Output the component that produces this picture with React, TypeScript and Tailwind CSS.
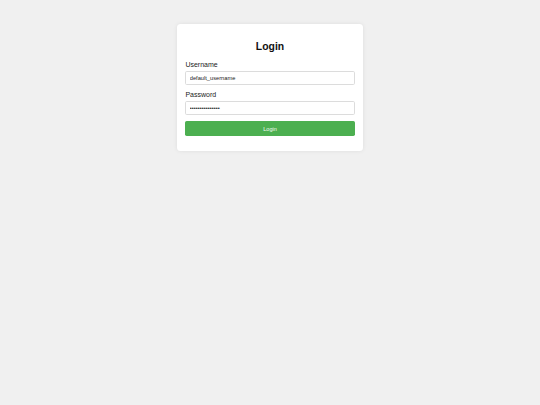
import React from "react";

export default function App() {
  return (
    <div className="min-h-screen w-full bg-[#f0f0f0] pt-[24px] font-['Liberation_Sans',Arial,sans-serif]">
      <div className="mx-auto w-[186px] rounded-[3.5px] bg-white px-[8.4px] pt-[8.4px] pb-[14.5px] shadow-[0_0_4px_rgba(0,0,0,0.08)]">
        <h2 className="my-[8.4px] text-center text-[10.4px] font-bold leading-[11.6px] text-[#111]">Login</h2>
        <label className="mb-[2.1px] block text-[7px] leading-[7.8px] text-[#222]">Username</label>
        <input
          type="text"
          readOnly
          value="default_username"
          className="mb-[6.3px] box-border block h-[14px] w-full rounded-[1.7px] border border-[#dcdcdc] bg-white px-[3.4px] text-[5.7px] text-[#222] outline-none"
        />
        <label className="mb-[2.1px] block text-[7px] leading-[7.8px] text-[#222]">Password</label>
        <input
          type="password"
          readOnly
          value="default_passwor"
          className="mb-[6.3px] box-border block h-[14px] w-full rounded-[1.7px] border border-[#dcdcdc] bg-white px-[3.4px] text-[5.7px] text-[#222] outline-none"
        />
        <button className="block h-[15px] w-full rounded-[1.7px] bg-[#4caf50] text-[5.5px] font-normal text-[#f4fbf4]">Login</button>
      </div>
    </div>
  );
}
